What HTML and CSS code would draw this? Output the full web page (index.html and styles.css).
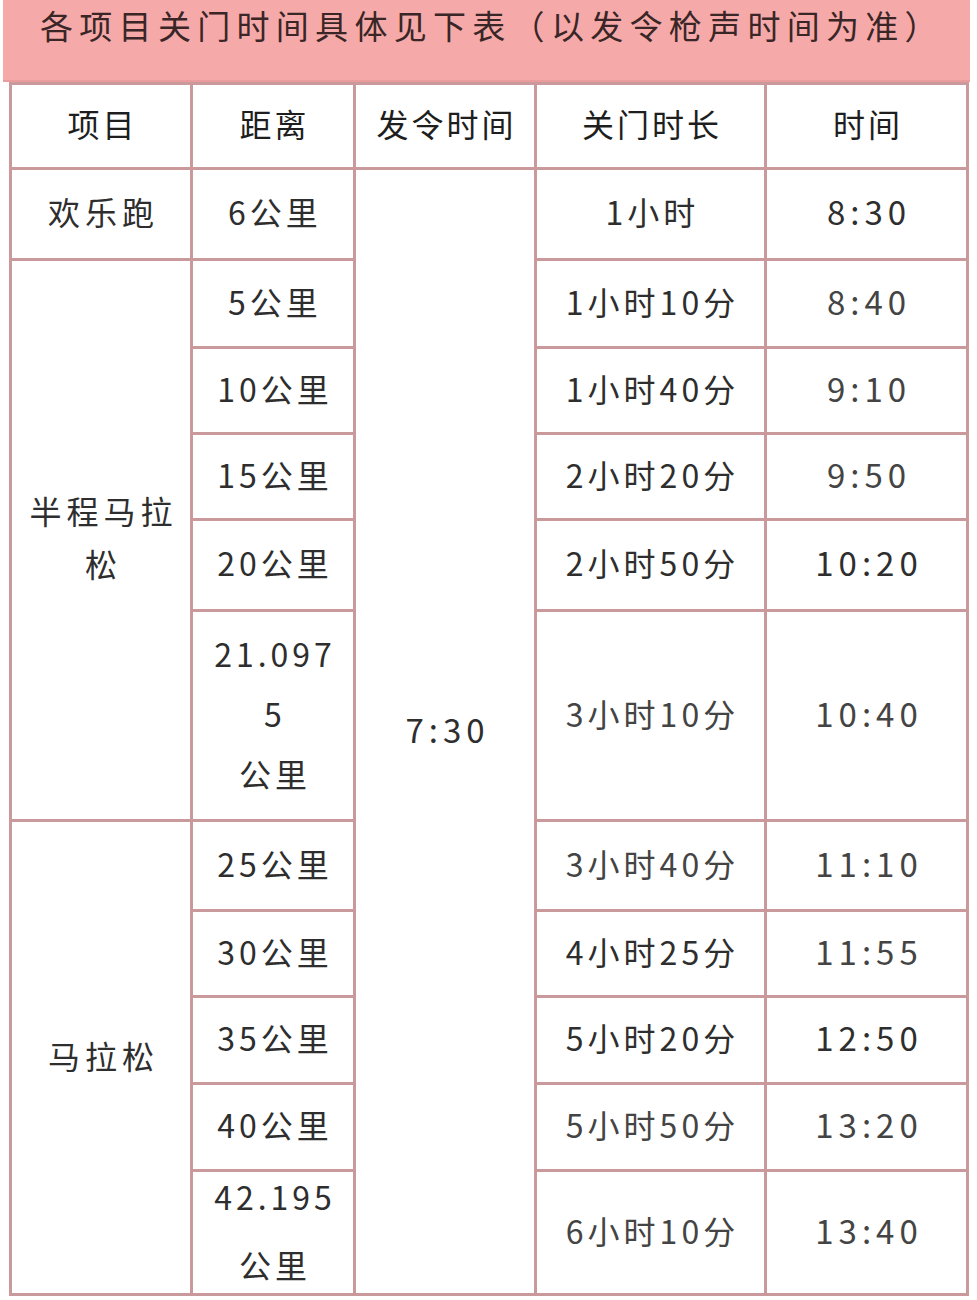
FILE: index.html
```html
<!DOCTYPE html>
<html lang="zh-CN">
<head>
<meta charset="utf-8">
<title>关门时间</title>
<link rel="stylesheet" href="styles.css">
</head>
<body>
<div class="page">
  <div class="banner">各项目关门时间具体见下表（以发令枪声时间为准）</div>
  <div class="table">
    <div class="cell head">项目</div>
    <div class="cell head">距离</div>
    <div class="cell head">发令时间</div>
    <div class="cell head">关门时长</div>
    <div class="cell head">时间</div>

    <div class="cell c1">欢乐跑</div>
    <div class="cell">6公里</div>
    <div class="cell start num">7:30</div>
    <div class="cell">1小时</div>
    <div class="cell num">8:30</div>

    <div class="cell c1 span5 two">半程马拉<br>松</div>
    <div class="cell">5公里</div>
    <div class="cell">1小时10分</div>
    <div class="cell light num">8:40</div>

    <div class="cell">10公里</div>
    <div class="cell">1小时40分</div>
    <div class="cell light num">9:10</div>

    <div class="cell">15公里</div>
    <div class="cell">2小时20分</div>
    <div class="cell light num">9:50</div>

    <div class="cell">20公里</div>
    <div class="cell">2小时50分</div>
    <div class="cell num">10:20</div>

    <div class="cell three">21.097<br>5<br>公里</div>
    <div class="cell light">3小时10分</div>
    <div class="cell light num">10:40</div>

    <div class="cell c1 span5">马拉松</div>
    <div class="cell">25公里</div>
    <div class="cell light">3小时40分</div>
    <div class="cell light num">11:10</div>

    <div class="cell">30公里</div>
    <div class="cell">4小时25分</div>
    <div class="cell light num">11:55</div>

    <div class="cell">35公里</div>
    <div class="cell">5小时20分</div>
    <div class="cell num">12:50</div>

    <div class="cell">40公里</div>
    <div class="cell light">5小时50分</div>
    <div class="cell light num">13:20</div>

    <div class="cell twoline">42.195<br>公里</div>
    <div class="cell light">6小时10分</div>
    <div class="cell light num">13:40</div>
  </div>
</div>
</body>
</html>
```

FILE: styles.css
```css
html, body {
  margin: 0;
  padding: 0;
  background: #ffffff;
}

.page {
  width: 977px;
  height: 1300px;
  font-family: "Noto Sans CJK SC", "Noto Sans", sans-serif;
  color: #2b2b2b;
}

.banner {
  margin-left: 3px;
  width: 967px;
  height: 82px;
  box-sizing: border-box;
  background: #f5aaa9;
  border-bottom: 2px solid #ea9c9c;
  padding: 7px 0 0 37px;
  font-size: 33px;
  line-height: 36px;
  letter-spacing: 6.3px;
  color: #3a2626;
  white-space: nowrap;
}

.table {
  margin-left: 9px;
  width: 960px;
  box-sizing: border-box;
  padding: 3px;
  display: grid;
  gap: 3px;
  background: #c9999b;
  grid-template-columns: 178px 160px 178px 227px 199px;
  grid-template-rows: 82px 88px 85px 83px 83px 88px 207px 87px 83px 84px 84px 121px;
}

.cell {
  background: #ffffff;
  display: flex;
  align-items: center;
  justify-content: center;
  text-align: center;
  font-size: 32px;
  line-height: 40px;
  letter-spacing: 4px;
  padding-left: 4px;
  padding-bottom: 6px;
  color: #2e2e2e;
}

.head {
  color: #1e1e1e;
  letter-spacing: 3px;
  padding-left: 3px;
}

.c1 {
  letter-spacing: 5px;
  padding-left: 5px;
}

.num {
  font-size: 33px;
  letter-spacing: 5px;
  padding-left: 5px;
}

.span5 {
  grid-row: span 5;
}

.two {
  line-height: 53px;
}

.start {
  grid-column: 3;
  grid-row: 2 / 13;
}

.three {
  line-height: 60px;
}

.twoline {
  line-height: 68px;
}

.light {
  color: #444444;
}
```
